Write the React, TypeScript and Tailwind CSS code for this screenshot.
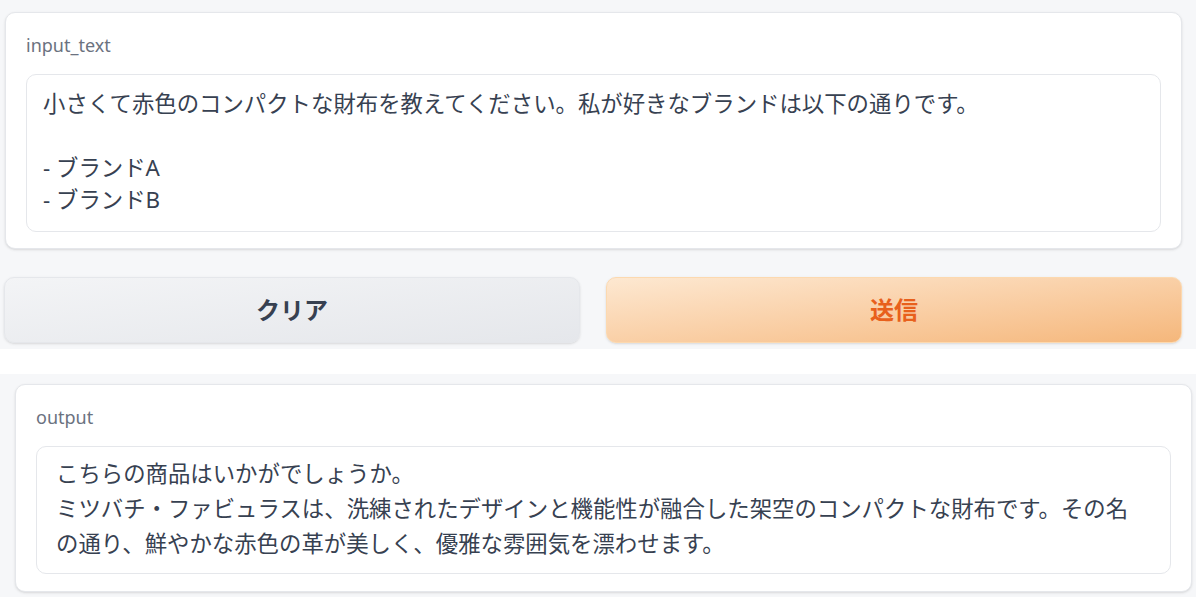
import React from 'react';

const font = { fontFamily: '"Noto Sans", "Noto Sans CJK JP", sans-serif' };

export default function App() {
    return (
        <div className="w-[1200px] h-[597px] bg-white overflow-hidden" style={font}>
            {/* Input block */}
            <div className="w-[1196px] bg-[#f6f7f9] pl-[4px] pr-[14px] pt-[12px] pb-[6px]">
                <div className="ml-[1px] rounded-[10px] border border-[#e5e7eb] bg-white pt-[20px] pb-[16px] px-[20px] shadow-sm">
                    <div className="text-[18px] leading-[24px] text-[#6b7280]">input_text</div>
                    <div className="mt-[17px] h-[158px] rounded-[10px] border border-[#e5e7eb] bg-white pl-[16px] pt-[13px] text-[22.4px] leading-[32px] text-[#374151]">
                        <div>小さくて赤色のコンパクトな財布を教えてください。私が好きなブランドは以下の通りです。</div>
                        <div>&nbsp;</div>
                        <div>- ブランドA</div>
                        <div>- ブランドB</div>
                    </div>
                </div>

                {/* Buttons */}
                <div className="mt-[28px] grid grid-cols-2 gap-[26px]">
                    <button className="h-[66px] rounded-[10px] border border-[#e5e7eb] bg-gradient-to-br from-[#f3f4f6] to-[#e5e7eb] text-[24px] font-bold text-[#374151] shadow-sm">
                        クリア
                    </button>
                    <button className="h-[66px] rounded-[10px] border border-[#fcd9b0] bg-gradient-to-br from-[#fde8d1] to-[#f5b77b] text-[24px] font-bold text-[#e8601c] shadow-sm">
                        送信
                    </button>
                </div>
            </div>

            <div className="h-[25px]" />

            {/* Output block */}
            <div className="w-[1196px] bg-[#f6f7f9] pl-[15px] pr-[4px] pt-[10px] pb-[8px]">
                <div className="rounded-[10px] border border-[#e5e7eb] bg-white pt-[20px] pb-[17px] px-[20px] shadow-sm">
                    <div className="text-[18px] leading-[24px] text-[#6b7280]">output</div>
                    <div className="mt-[17px] h-[128px] rounded-[10px] border border-[#e5e7eb] bg-white pl-[19px] pr-[30px] pt-[9px] text-[22.4px] leading-[35px] text-[#374151]">
                        こちらの商品はいかがでしょうか。
                        <br />
                        ミツバチ・ファビュラスは、洗練されたデザインと機能性が融合した架空のコンパクトな財布です。その名の通り、鮮やかな赤色の革が美しく、優雅な雰囲気を漂わせます。
                    </div>
                </div>
            </div>
        </div>
    );
}
